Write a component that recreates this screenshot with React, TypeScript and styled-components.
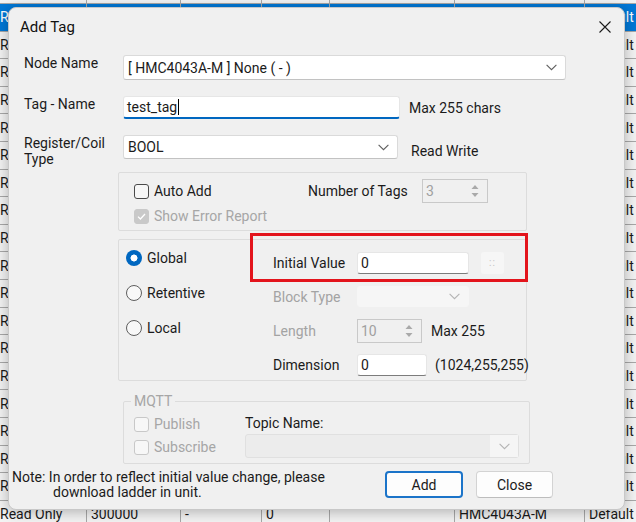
import React from "react";
import styled, { createGlobalStyle } from "styled-components";

const GlobalStyle = createGlobalStyle`
  html, body {
    margin: 0;
    padding: 0;
  }
  body {
    width: 636px;
    height: 522px;
    overflow: hidden;
    font-family: Roboto, "Liberation Sans", sans-serif;
  }
`;

const Screen = styled.div`
  position: relative;
  width: 636px;
  height: 522px;
  overflow: hidden;
  background: #f2f2f2;
`;

/* ---------- data grid behind the dialog ---------- */

const Sheet = styled.div`
  margin-top: -23.6px;
  margin-left: -4px;
  font-size: 14px;
`;

const SheetRow = styled.div<{ $selected?: boolean }>`
  display: grid;
  grid-template-columns: 91px 94px 81px 68px 125px 130px 60px;
  height: 27.6px;
  background: ${(p) => (p.$selected ? "#0078d7" : "#f3f3f3")};
  color: ${(p) => (p.$selected ? "#ffffff" : "#1a1a1a")};
`;

const SheetCell = styled.div`
  display: flex;
  align-items: center;
  padding-left: 4px;
  border-right: 1px solid #a8a8a8;
  border-bottom: 1px solid #a8a8a8;
  white-space: nowrap;
  overflow: hidden;
`;

/* ---------- dialog ---------- */

const Dialog = styled.div`
  position: absolute;
  left: 8px;
  top: 7px;
  width: 617px;
  height: 503px;
  box-sizing: border-box;
  background: #f0f0f0;
  border: 1px solid #c8c8c8;
  border-radius: 8px;
  box-shadow: 0 2px 14px rgba(0, 0, 0, 0.28);
  color: #1b1b1b;
  font-size: 14px;
`;

const TitleBar = styled.div`
  height: 37px;
  display: flex;
  align-items: center;
  justify-content: space-between;
  padding: 0 13px 0 11px;
`;

const Title = styled.span`
  font-size: 15px;
  color: #111;
`;

const Body = styled.div`
  display: flex;
  flex-direction: column;
  padding-left: 15px;
`;

const FieldRow = styled.div<{ $top: number }>`
  display: grid;
  grid-template-columns: 99px auto auto;
  align-items: start;
  justify-content: start;
  margin-top: ${(p) => p.$top}px;
`;

const Label = styled.span<{ $muted?: boolean }>`
  line-height: 16px;
  color: ${(p) => (p.$muted ? "#a3a3a3" : "#1b1b1b")};
  white-space: nowrap;
`;

const Aside = styled.span<{ $gap: number }>`
  align-self: center;
  margin-left: ${(p) => p.$gap}px;
  white-space: nowrap;
`;

const Select = styled.div<{ $w: number; $h: number; $disabled?: boolean }>`
  width: ${(p) => p.$w}px;
  height: ${(p) => p.$h}px;
  box-sizing: border-box;
  display: flex;
  align-items: center;
  justify-content: space-between;
  padding: 0 8px 0 4px;
  background: ${(p) => (p.$disabled ? "#f6f6f6" : "#ffffff")};
  border: 1px solid ${(p) => (p.$disabled ? "#f6f6f6" : "#dadada")};
  border-bottom-color: ${(p) => (p.$disabled ? "#f6f6f6" : "#c2c2c2")};
  border-radius: 3px;
`;

const TextBox = styled.div<{ $w: number; $h: number; $accent?: boolean }>`
  width: ${(p) => p.$w}px;
  height: ${(p) => p.$h}px;
  box-sizing: border-box;
  display: flex;
  align-items: center;
  padding-left: 3px;
  background: #ffffff;
  border: 1px solid #e6e6e6;
  border-bottom: ${(p) => (p.$accent ? "2px solid #0067c0" : "1px solid #7c7c7c")};
  border-radius: 3px;
`;

const Caret = styled.span`
  display: inline-block;
  width: 1px;
  height: 16px;
  margin-left: 1px;
  background: #000;
`;

const Spin = styled.div<{ $w: number }>`
  width: ${(p) => p.$w}px;
  height: 24px;
  box-sizing: border-box;
  display: flex;
  align-items: center;
  justify-content: space-between;
  padding: 0 8px 0 3px;
  background: #f0f0f0;
  border: 1px solid #c9c9c9;
  color: #a0a0a0;
`;

const GroupBox = styled.div<{ $top: number; $h: number }>`
  position: relative;
  margin: ${(p) => p.$top}px 0 0 94px;
  width: 409px;
  height: ${(p) => p.$h}px;
  box-sizing: border-box;
  border: 1px solid #dcdcdc;
  border-radius: 2px;
`;

const AutoGrid = styled.div`
  display: grid;
  grid-template-columns: 174px 114px 66px;
  align-items: center;
  height: 24px;
  margin: 6px 0 0 15px;
`;

const Check = styled.label<{ $muted?: boolean }>`
  display: flex;
  align-items: center;
  gap: 5px;
  height: 16px;
  color: ${(p) => (p.$muted ? "#a6a6a6" : "#1b1b1b")};
  white-space: nowrap;
`;

const CheckBox = styled.span<{ $state: "off" | "muted" | "mutedOn" }>`
  width: 15px;
  height: 15px;
  box-sizing: border-box;
  display: inline-flex;
  align-items: center;
  justify-content: center;
  border-radius: 3px;
  background: ${(p) => (p.$state === "mutedOn" ? "#c9c9c9" : "#f7f7f7")};
  border: 1px solid
    ${(p) => (p.$state === "off" ? "#4a4a4a" : p.$state === "muted" ? "#c8c8c8" : "#c9c9c9")};
`;

const ErrorRow = styled.div`
  margin: 5px 0 0 15px;
`;

const ScopeGrid = styled.div`
  display: grid;
  grid-template-columns: 147px 1fr;
  padding-left: 7px;
`;

const RadioList = styled.div`
  display: flex;
  flex-direction: column;
  gap: 15px;
  padding-top: 8px;
`;

const Radio = styled.label`
  display: flex;
  align-items: center;
  gap: 5px;
  height: 20px;
`;

const RadioDot = styled.span<{ $checked?: boolean }>`
  width: 16px;
  height: 16px;
  box-sizing: border-box;
  border-radius: 50%;
  background: ${(p) =>
    p.$checked ? "radial-gradient(circle, #ffffff 0 3.2px, #0067c0 3.8px)" : "#f8f8f8"};
  border: ${(p) => (p.$checked ? "none" : "1px solid #5e5e5e")};
`;

const ValueList = styled.div`
  display: flex;
  flex-direction: column;
  gap: 11px;
  padding-top: 11px;
`;

const ValueRow = styled.div`
  display: grid;
  grid-template-columns: 84px auto auto;
  justify-content: start;
  align-items: center;
  height: 23px;
`;

const DotsButton = styled.span`
  width: 23px;
  height: 22px;
  margin-left: 12px;
  display: flex;
  align-items: center;
  justify-content: center;
  background: #f6f6f6;
  border-radius: 3px;
  color: #c4c4c4;
  font-size: 10px;
  letter-spacing: 1px;
`;

const Highlight = styled.div`
  position: absolute;
  left: 131px;
  top: -7px;
  width: 278px;
  height: 49px;
  box-sizing: border-box;
  border: 3px solid #e3141c;
  pointer-events: none;
`;

const Fieldset = styled.fieldset`
  margin: 12px 0 0 99px;
  width: 407px;
  box-sizing: border-box;
  padding: 7px 9px 5px 10px;
  border: 1px solid #dcdcdc;
  border-radius: 2px;
  display: grid;
  grid-template-columns: 111px 274px;
`;

const Legend = styled.legend`
  padding: 0 3px;
  margin-left: -3px;
  line-height: 16px;
  color: #a6a6a6;
`;

const Stack = styled.div<{ $gap: number }>`
  display: flex;
  flex-direction: column;
  gap: ${(p) => p.$gap}px;
`;

const TopicLabel = styled.span`
  line-height: 14px;
`;

const TopicSelect = styled.div`
  height: 24px;
  box-sizing: border-box;
  display: flex;
  align-items: center;
  justify-content: flex-end;
  background: #ececec;
  border: 1px solid #e0e0e0;
  border-radius: 3px;
`;

const ChevronSlot = styled.span`
  width: 28px;
  height: 100%;
  display: flex;
  align-items: center;
  justify-content: center;
  background: #f5f5f5;
`;

const Footer = styled.div`
  display: flex;
  align-items: flex-start;
  margin-top: 6px;
  padding-left: 3px;
`;

const Note = styled.div`
  width: 373px;
  line-height: 15px;
  white-space: nowrap;
`;

const NoteLine = styled.div<{ $indent?: number }>`
  padding-left: ${(p) => p.$indent ?? 0}px;
`;

const Button = styled.button<{ $primary?: boolean }>`
  width: ${(p) => (p.$primary ? 78 : 77)}px;
  height: 27px;
  margin: 1px 0 0 ${(p) => (p.$primary ? 0 : 13)}px;
  box-sizing: border-box;
  font: inherit;
  color: #1b1b1b;
  background: #fdfdfd;
  border: ${(p) => (p.$primary ? "2px solid #1b74c9" : "1px solid #d3d3d3")};
  border-bottom-color: ${(p) => (p.$primary ? "#1b74c9" : "#bdbdbd")};
  border-radius: 4px;
`;

/* ---------- small drawings ---------- */

const Chevron = ({ color = "#5f5f5f" }: { color?: string }) => (
  <svg width="11" height="7" viewBox="0 0 11 7">
    <path d="M0.6 0.8 L5.5 5.7 L10.4 0.8" fill="none" stroke={color} strokeWidth="1.1" />
  </svg>
);

const SpinArrows = () => (
  <svg width="8" height="16" viewBox="0 0 8 16">
    <path d="M4 2 L7.5 6 L0.5 6 Z" fill="#a9a9a9" />
    <path d="M4 14 L7.5 10 L0.5 10 Z" fill="#a9a9a9" />
  </svg>
);

const CloseIcon = () => (
  <svg width="12" height="12" viewBox="0 0 12 12">
    <path d="M0.5 0.5 L11.5 11.5 M11.5 0.5 L0.5 11.5" stroke="#1b1b1b" strokeWidth="1.1" />
  </svg>
);

const Tick = () => (
  <svg width="9" height="7" viewBox="0 0 9 7">
    <path d="M1 3.6 L3.4 6 L8 1" fill="none" stroke="#ffffff" strokeWidth="1.3" />
  </svg>
);

// rows hidden under the dialog only show their first and last column
const rows: string[][] = Array.from({ length: 19 }, (_, i) =>
  i === 0 ? ["", "", "", "", "", "", ""] : ["Read Write", "", "", "", "", "", "Default"]
);
rows.push(["Read Only", "300000", "-", "0", "", "HMC4043A-M", "Default"]);

export default function App() {
  return (
    <>
      <GlobalStyle />
      <Screen>
        <Sheet>
          {rows.map((cells, i) => (
            <SheetRow key={i} $selected={i === 1}>
              {cells.map((c, j) => (
                <SheetCell key={j}>{c}</SheetCell>
              ))}
            </SheetRow>
          ))}
        </Sheet>

        <Dialog>
          <TitleBar>
            <Title>Add Tag</Title>
            <CloseIcon />
          </TitleBar>

          <Body>
            <FieldRow $top={10}>
              <Label>Node Name</Label>
              <Select $w={443} $h={25}>
                <span>[ HMC4043A-M ] None ( - )</span>
                <Chevron />
              </Select>
            </FieldRow>

            <FieldRow $top={16}>
              <Label>Tag - Name</Label>
              <TextBox $w={277} $h={23} $accent>
                test_tag
                <Caret />
              </TextBox>
              <Aside $gap={9}>Max 255 chars</Aside>
            </FieldRow>

            <FieldRow $top={16}>
              <Label>
                Register/Coil
                <br />
                Type
              </Label>
              <Select $w={275} $h={24}>
                <span>BOOL</span>
                <Chevron />
              </Select>
              <Aside $gap={13}>Read Write</Aside>
            </FieldRow>

            <GroupBox $top={5} $h={59}>
              <AutoGrid>
                <Check>
                  <CheckBox $state="off" />
                  Auto Add
                </Check>
                <span>Number of Tags</span>
                <Spin $w={66}>
                  <span>3</span>
                  <SpinArrows />
                </Spin>
              </AutoGrid>
              <ErrorRow>
                <Check $muted>
                  <CheckBox $state="mutedOn">
                    <Tick />
                  </CheckBox>
                  Show Error Report
                </Check>
              </ErrorRow>
            </GroupBox>

            <GroupBox $top={8} $h={142}>
              <ScopeGrid>
                <RadioList>
                  <Radio>
                    <RadioDot $checked />
                    Global
                  </Radio>
                  <Radio>
                    <RadioDot />
                    Retentive
                  </Radio>
                  <Radio>
                    <RadioDot />
                    Local
                  </Radio>
                </RadioList>
                <ValueList>
                  <ValueRow>
                    <Label>Initial Value</Label>
                    <TextBox $w={112} $h={22}>
                      0
                    </TextBox>
                    <DotsButton>::</DotsButton>
                  </ValueRow>
                  <ValueRow>
                    <Label $muted>Block Type</Label>
                    <Select $w={112} $h={21} $disabled>
                      <span />
                      <Chevron color="#b4b4b4" />
                    </Select>
                  </ValueRow>
                  <ValueRow>
                    <Label $muted>Length</Label>
                    <Spin $w={65}>
                      <span>10</span>
                      <SpinArrows />
                    </Spin>
                    <Aside $gap={9}>Max 255</Aside>
                  </ValueRow>
                  <ValueRow>
                    <Label>Dimension</Label>
                    <TextBox $w={70} $h={22}>
                      0
                    </TextBox>
                    <Aside $gap={8}>(1024,255,255)</Aside>
                  </ValueRow>
                </ValueList>
              </ScopeGrid>
              <Highlight />
            </GroupBox>

            <Fieldset>
              <Legend>MQTT</Legend>
              <Stack $gap={7}>
                <Check $muted>
                  <CheckBox $state="muted" />
                  Publish
                </Check>
                <Check $muted>
                  <CheckBox $state="muted" />
                  Subscribe
                </Check>
              </Stack>
              <Stack $gap={4}>
                <TopicLabel>Topic Name:</TopicLabel>
                <TopicSelect>
                  <ChevronSlot>
                    <Chevron color="#b4b4b4" />
                  </ChevronSlot>
                </TopicSelect>
              </Stack>
            </Fieldset>
          </Body>

          <Footer>
            <Note>
              <NoteLine>Note: In order to reflect initial value change, please</NoteLine>
              <NoteLine $indent={41}>download ladder in unit.</NoteLine>
            </Note>
            <Button $primary>Add</Button>
            <Button>Close</Button>
          </Footer>
        </Dialog>
      </Screen>
    </>
  );
}
